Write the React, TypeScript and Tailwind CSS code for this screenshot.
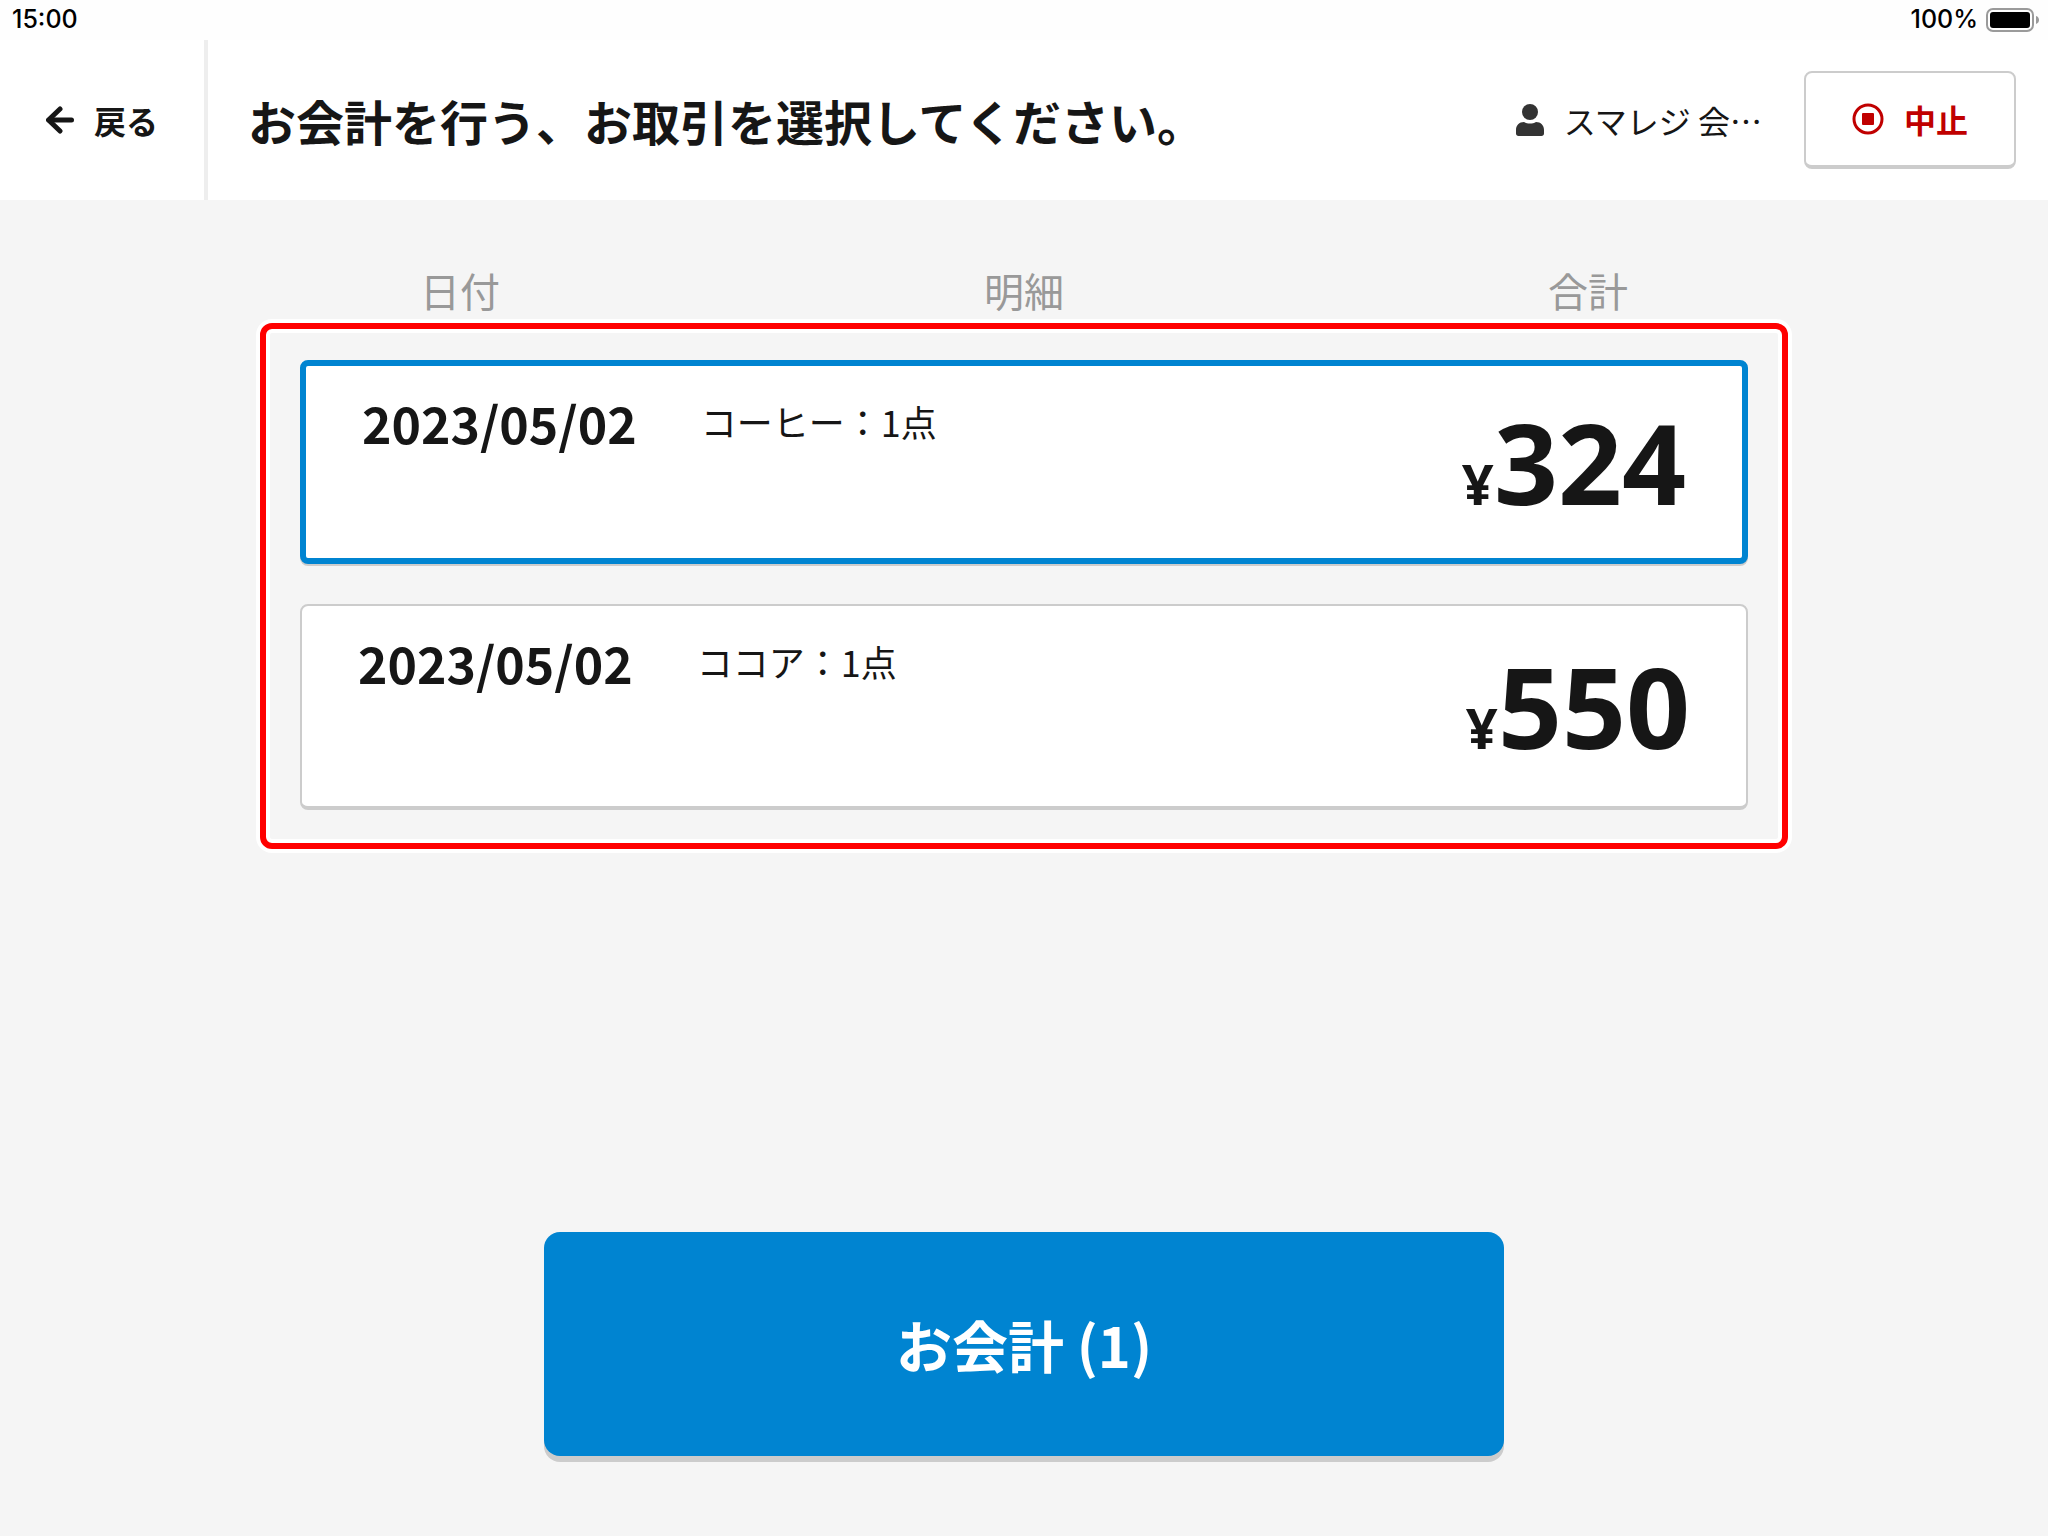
import React, { useState } from "react";

interface Transaction {
  id: number;
  date: string;
  detail: string;
  total: number;
}

const TRANSACTIONS: Transaction[] = [
  { id: 1, date: "2023/05/02", detail: "コーヒー：1点", total: 324 },
  { id: 2, date: "2023/05/02", detail: "ココア：1点", total: 550 },
];

const StatusBar: React.FC = () => (
  <div className="flex h-10 items-center justify-between bg-[#fefefe] pl-3 pr-[6px] font-['Inter',sans-serif] text-[25px] font-medium text-black">
    <span>15:00</span>
    <div className="flex items-center gap-2">
      <span>100%</span>
      <svg className="h-6 w-14" viewBox="0 0 56 24" fill="none">
        <rect x="1" y="1" width="46" height="22" rx="6" stroke="#9a9a9a" strokeWidth="2" />
        <rect x="4" y="4" width="40" height="16" rx="3" fill="#000" />
        <path d="M50 8c2 .6 3 2.200 3 4s-1 3.400-3 4z" fill="#9a9a9a" />
      </svg>
    </div>
  </div>
);

const Header: React.FC = () => (
  <header className="flex h-40 items-stretch bg-white">
    <button type="button" className="flex w-52 shrink-0 items-center justify-center gap-5 border-r-4 border-[#eeeeee] text-[32px] font-bold">
      <svg className="h-8 w-7" viewBox="0 0 28 32" fill="none" stroke="currentColor" strokeWidth="5" strokeLinecap="round" strokeLinejoin="round">
        <path d="M25.500 16H3" />
        <path d="M14 5L2.500 16L14 27" />
      </svg>
      戻る
    </button>
    <div className="flex flex-1 items-center justify-between pl-10 pr-8">
      <h1 className="text-5xl font-bold">お会計を行う、お取引を選択してください。</h1>
      <div className="flex items-center gap-[42px]">
        <div className="flex items-center gap-5 text-[32px]">
          <svg className="h-8 w-7" viewBox="0 0 28 32" fill="#333">
            <circle cx="14" cy="8" r="8" />
            <path d="M8 18c1.800 1.100 3.900 1.600 6 1.600s4.200-.5 6-1.600c4.800 0 8 3.500 8 8v3.500c0 1.500-1 2.500-2.500 2.500h-23C1 32 0 31 0 29.500V26c0-4.500 3.200-8 8-8z" />
          </svg>
          <span>スマレジ 会…</span>
        </div>
        <button
          type="button"
          className="flex h-[98px] w-[212px] items-center justify-center gap-5 rounded-lg border-2 border-b-4 border-[#cccccc] bg-white text-[32px] font-bold text-[#c00000]"
        >
          <svg className="size-8" viewBox="0 0 32 32" fill="none">
            <circle cx="16" cy="16" r="14" stroke="currentColor" strokeWidth="3" />
            <rect x="10" y="10" width="12" height="12" rx="1" fill="currentColor" />
          </svg>
          中止
        </button>
      </div>
    </div>
  </header>
);

interface TransactionCardProps {
  transaction: Transaction;
  selected: boolean;
  onToggle: (id: number) => void;
}

const TransactionCard: React.FC<TransactionCardProps> = ({ transaction, selected, onToggle }) => (
  <button
    type="button"
    aria-pressed={selected}
    onClick={() => onToggle(transaction.id)}
    className={`flex w-full items-stretch justify-between rounded-lg bg-white px-14 text-left ${
      selected ? "mb-[2px] h-[204px] border-6 border-[#0084d1] shadow-[0_2px_0_#cccccc]" : "h-[206px] border-2 border-b-4 border-[#cccccc]"
    }`}
  >
    <span className="flex items-start gap-16 pt-[23px]">
      <span className="text-[50px] leading-[66px] font-bold">{transaction.date}</span>
      <span className="text-4xl leading-[64px]">{transaction.detail}</span>
    </span>
    <span className="self-center font-['Open_Sans',sans-serif] text-[112px] leading-none font-bold">
      <span className="text-[56px]">¥</span>
      {transaction.total}
    </span>
  </button>
);

export default function App() {
  const [selectedIds, setSelectedIds] = useState<number[]>([1]);

  const handleToggle = (id: number) => {
    setSelectedIds((prev) => (prev.includes(id) ? prev.filter((x) => x !== id) : [...prev, id]));
  };

  return (
    <div className="flex min-h-screen flex-col bg-[#f5f5f5] font-['Noto_Sans_CJK_JP',sans-serif] text-[#161616]">
      <StatusBar />
      <Header />

      <main className="flex flex-1 flex-col px-65 pt-15">
        {/* Column titles */}
        <div className="mb-[3px] grid grid-cols-[400px_1fr_400px] text-center text-[40px] leading-[60px] text-[#999999]">
          <span>日付</span>
          <span>明細</span>
          <span>合計</span>
        </div>

        {/* Transaction list */}
        <div className="flex flex-col gap-[38px] rounded-xl border-6 border-[#ff0000] px-[34px] pt-[31px] pb-[33px] shadow-[0_0_0_4px_#ffffff,inset_0_0_0_4px_#ffffff]">
          {TRANSACTIONS.map((t) => (
            <TransactionCard key={t.id} transaction={t} selected={selectedIds.includes(t.id)} onToggle={handleToggle} />
          ))}
        </div>
      </main>

      <footer className="flex justify-center pb-20">
        <button type="button" className="h-56 w-[960px] rounded-2xl bg-[#0084d1] text-[56px] font-bold text-white shadow-[0_6px_0_#cccccc]">
          お会計 ({selectedIds.length})
        </button>
      </footer>
    </div>
  );
}
